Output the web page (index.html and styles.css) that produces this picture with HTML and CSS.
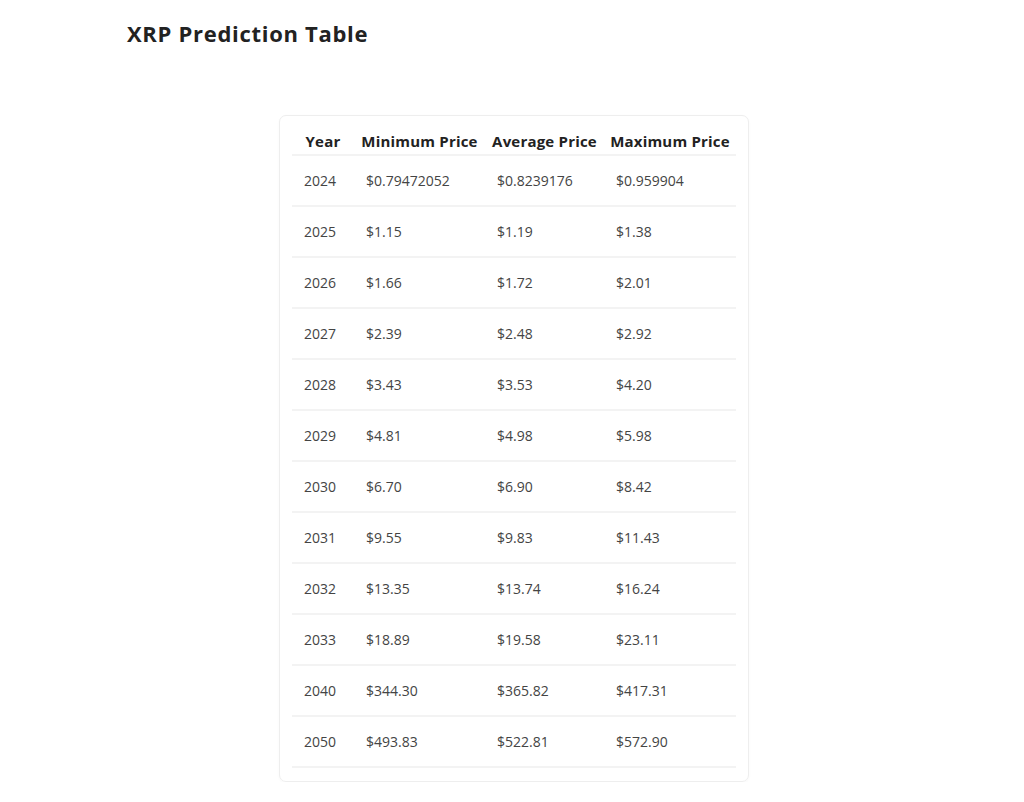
FILE: index.html
```html
<!DOCTYPE html>
<html lang="en">
<head>
<meta charset="utf-8">
<title>XRP Prediction Table</title>
<link rel="stylesheet" href="styles.css">
</head>
<body>
<main class="page">
  <h2 class="title">XRP Prediction Table</h2>
  <div class="card">
    <table class="pred">
      <colgroup>
        <col class="c1"><col class="c2"><col class="c3"><col class="c4">
      </colgroup>
      <thead>
        <tr><th>Year</th><th>Minimum Price</th><th>Average Price</th><th>Maximum Price</th></tr>
      </thead>
      <tbody>
        <tr><td>2024</td><td>$0.79472052</td><td>$0.8239176</td><td>$0.959904</td></tr>
        <tr><td>2025</td><td>$1.15</td><td>$1.19</td><td>$1.38</td></tr>
        <tr><td>2026</td><td>$1.66</td><td>$1.72</td><td>$2.01</td></tr>
        <tr><td>2027</td><td>$2.39</td><td>$2.48</td><td>$2.92</td></tr>
        <tr><td>2028</td><td>$3.43</td><td>$3.53</td><td>$4.20</td></tr>
        <tr><td>2029</td><td>$4.81</td><td>$4.98</td><td>$5.98</td></tr>
        <tr><td>2030</td><td>$6.70</td><td>$6.90</td><td>$8.42</td></tr>
        <tr><td>2031</td><td>$9.55</td><td>$9.83</td><td>$11.43</td></tr>
        <tr><td>2032</td><td>$13.35</td><td>$13.74</td><td>$16.24</td></tr>
        <tr><td>2033</td><td>$18.89</td><td>$19.58</td><td>$23.11</td></tr>
        <tr><td>2040</td><td>$344.30</td><td>$365.82</td><td>$417.31</td></tr>
        <tr><td>2050</td><td>$493.83</td><td>$522.81</td><td>$572.90</td></tr>
      </tbody>
    </table>
  </div>
</main>
</body>
</html>
```

FILE: styles.css
```css
html, body {
  margin: 0;
  padding: 0;
  background: #ffffff;
}
body {
  font-family: "Open Sans", "Noto Sans", sans-serif;
  color: #333;
}
.page {
  padding: 18px 0 0 127px;
}
.title {
  margin: 0;
  font-size: 22px;
  line-height: 30px;
  font-weight: 700;
  letter-spacing: 0.7px;
  color: #222;
}
.card {
  margin: 67px 0 0 152px;
  width: 444px;
  padding: 12px 12px 13px;
  border: 1px solid #eeeeee;
  border-radius: 7px;
  box-shadow: 0 1px 3px rgba(0,0,0,0.03);
}
.pred {
  border-collapse: collapse;
  table-layout: fixed;
  width: 444px;
}
.c1 { width: 62px; }
.c2 { width: 131px; }
.c3 { width: 119px; }
.c4 { width: 132px; }
.pred th {
  height: 26px;
  padding: 0 4px;
  font-size: 15px;
  font-weight: 700;
  color: #222;
  text-align: center;
  vertical-align: top;
  line-height: 26px;
  letter-spacing: 0.2px;
  border-bottom: 2px solid #f3f3f3;
  white-space: nowrap;
}
.pred td {
  height: 49px;
  padding: 0 0 0 12px;
  font-size: 14px;
  color: #444;
  text-align: left;
  border-bottom: 2px solid #f3f3f3;
  white-space: nowrap;
}
```
